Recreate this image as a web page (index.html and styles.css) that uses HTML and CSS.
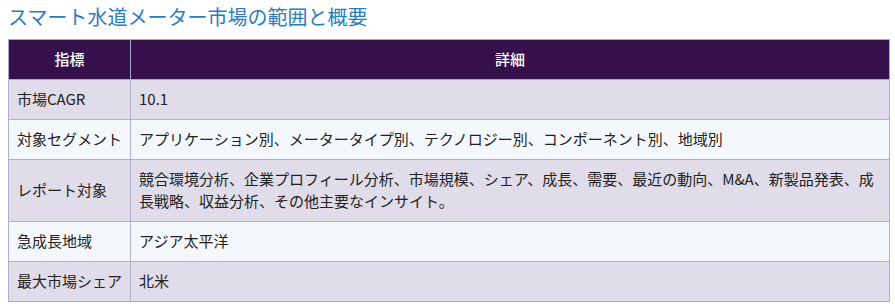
FILE: index.html
```html
<!DOCTYPE html>
<html lang="ja">
<head>
<meta charset="utf-8">
<title>スマート水道メーター市場の範囲と概要</title>
<link rel="stylesheet" href="styles.css">
</head>
<body>
<h2 class="title">スマート水道メーター市場の範囲と概要</h2>
<table class="summary">
  <thead>
    <tr><th class="col-key">指標</th><th>詳細</th></tr>
  </thead>
  <tbody>
    <tr><td>市場CAGR</td><td>10.1</td></tr>
    <tr><td>対象セグメント</td><td>アプリケーション別、メータータイプ別、テクノロジー別、コンポーネント別、地域別</td></tr>
    <tr><td>レポート対象</td><td>競合環境分析、企業プロフィール分析、市場規模、シェア、成長、需要、最近の動向、M&amp;A、新製品発表、成長戦略、収益分析、その他主要なインサイト。</td></tr>
    <tr><td>急成長地域</td><td>アジア太平洋</td></tr>
    <tr><td>最大市場シェア</td><td>北米</td></tr>
  </tbody>
</table>
</body>
</html>
```

FILE: styles.css
```css
html, body {
  margin: 0;
  padding: 0;
  background: #ffffff;
}
body {
  padding: 0 8px;
  font-family: "Noto Sans CJK JP", "Noto Sans", sans-serif;
  color: #222222;
}
.title {
  margin: 3px 0 8px 0;
  font-size: 20px;
  line-height: 28px;
  font-weight: normal;
  color: #2d7cbb;
}
.summary {
  width: 882px;
  border-collapse: collapse;
  font-size: 15px;
  line-height: 22px;
}
.summary th,
.summary td {
  border: 1px solid #b3aec8;
  padding: 8px 8px 9px 8px;
  text-align: left;
  vertical-align: middle;
}
.summary th {
  background: #36104a;
  color: #ffffff;
  font-weight: 500;
  text-align: center;
  border-color: #b0a3cb;
}
.summary .col-key {
  width: 105px;
}
.summary tbody tr:nth-child(odd) td {
  background: #e0dcea;
}
.summary tbody tr:nth-child(even) td {
  background: #f4f8fc;
}
```
